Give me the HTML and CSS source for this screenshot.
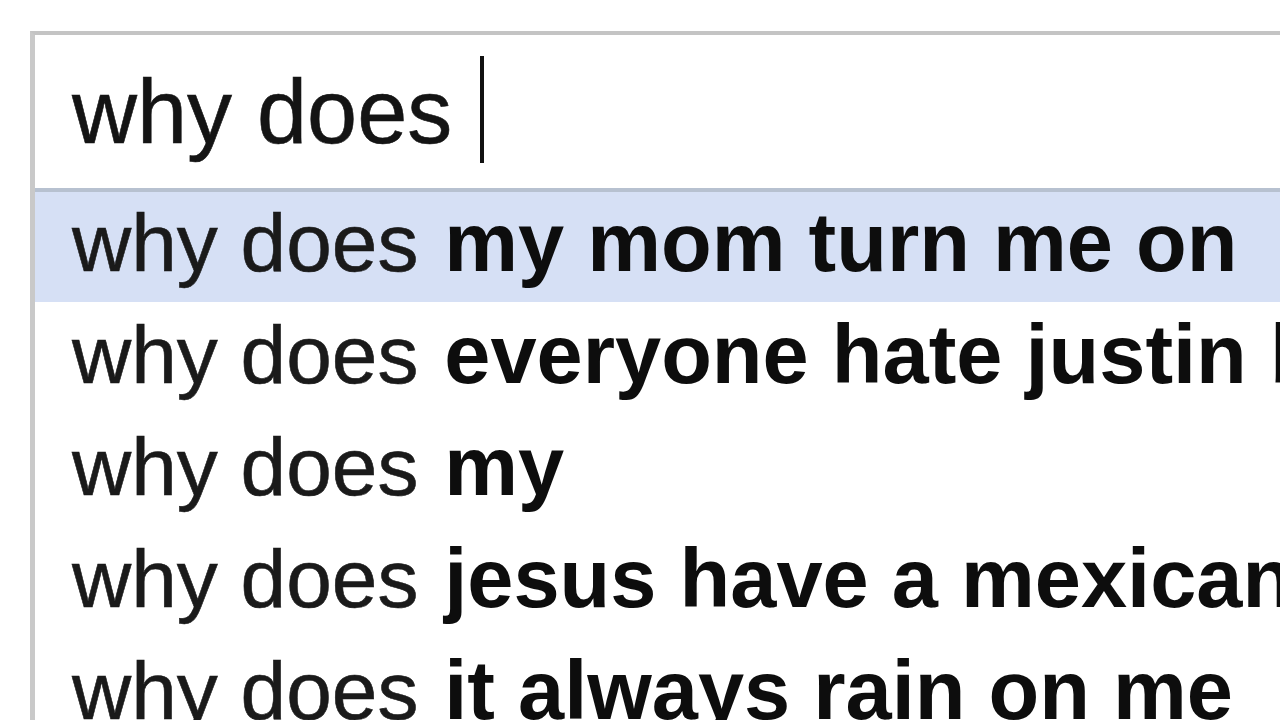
FILE: index.html
```html
<!DOCTYPE html>
<html lang="en">
<head>
<meta charset="utf-8">
<title>why does</title>
<link rel="stylesheet" href="styles.css">
</head>
<body>
<div class="search">
  <div class="input"><span class="typed">why does</span><span class="cursor"></span></div>
  <ul class="suggestions">
    <li class="item active"><span class="q">why does</span> <b>my mom turn me on</b></li>
    <li class="item"><span class="q">why does</span> <b>everyone hate justin bieber</b></li>
    <li class="item"><span class="q">why does</span> <b>my</b></li>
    <li class="item"><span class="q">why does</span> <b>jesus have a mexican name</b></li>
    <li class="item"><span class="q">why does</span> <b>it always rain on me</b></li>
  </ul>
</div>
</body>
</html>
```
FILE: styles.css
```css
html, body {
  margin: 0;
  padding: 0;
  background: #ffffff;
  overflow: hidden;
  height: 720px;
}
body {
  font-family: "Liberation Sans", Arial, sans-serif;
  color: #151515;
}
.search {
  margin: 31px 0 0 30px;
  border-left: 5px solid #c9c9c9;
  border-top: 4px solid #c4c4c4;
  white-space: nowrap;
  overflow: hidden;
}
.input {
  height: 153px;
  box-sizing: border-box;
  padding: 17px 0 0 37px;
  font-size: 90px;
  line-height: 120px;
  color: #141414;
  -webkit-text-stroke: 0.6px #141414;
}
.cursor {
  display: inline-block;
  width: 4px;
  height: 107px;
  background: #111;
  margin-left: 28px;
  vertical-align: -20px;
}
.suggestions {
  list-style: none;
  margin: 0;
  padding: 0;
  border-top: 4px solid #b7c1d0;
}
.item {
  height: 112px;
  box-sizing: border-box;
  padding: 0 0 10px 37px;
  font-size: 82px;
  line-height: 102px;
}
.item.active {
  background: #d6e0f5;
  height: 110px;
  margin-bottom: 2px;
}
.q {
  color: #1a1a1a;
  -webkit-text-stroke: 0.6px #1a1a1a;
}
.item b {
  font-weight: 700;
  font-size: 83px;
  color: #0d0d0d;
  margin-left: 3px;
}
```
